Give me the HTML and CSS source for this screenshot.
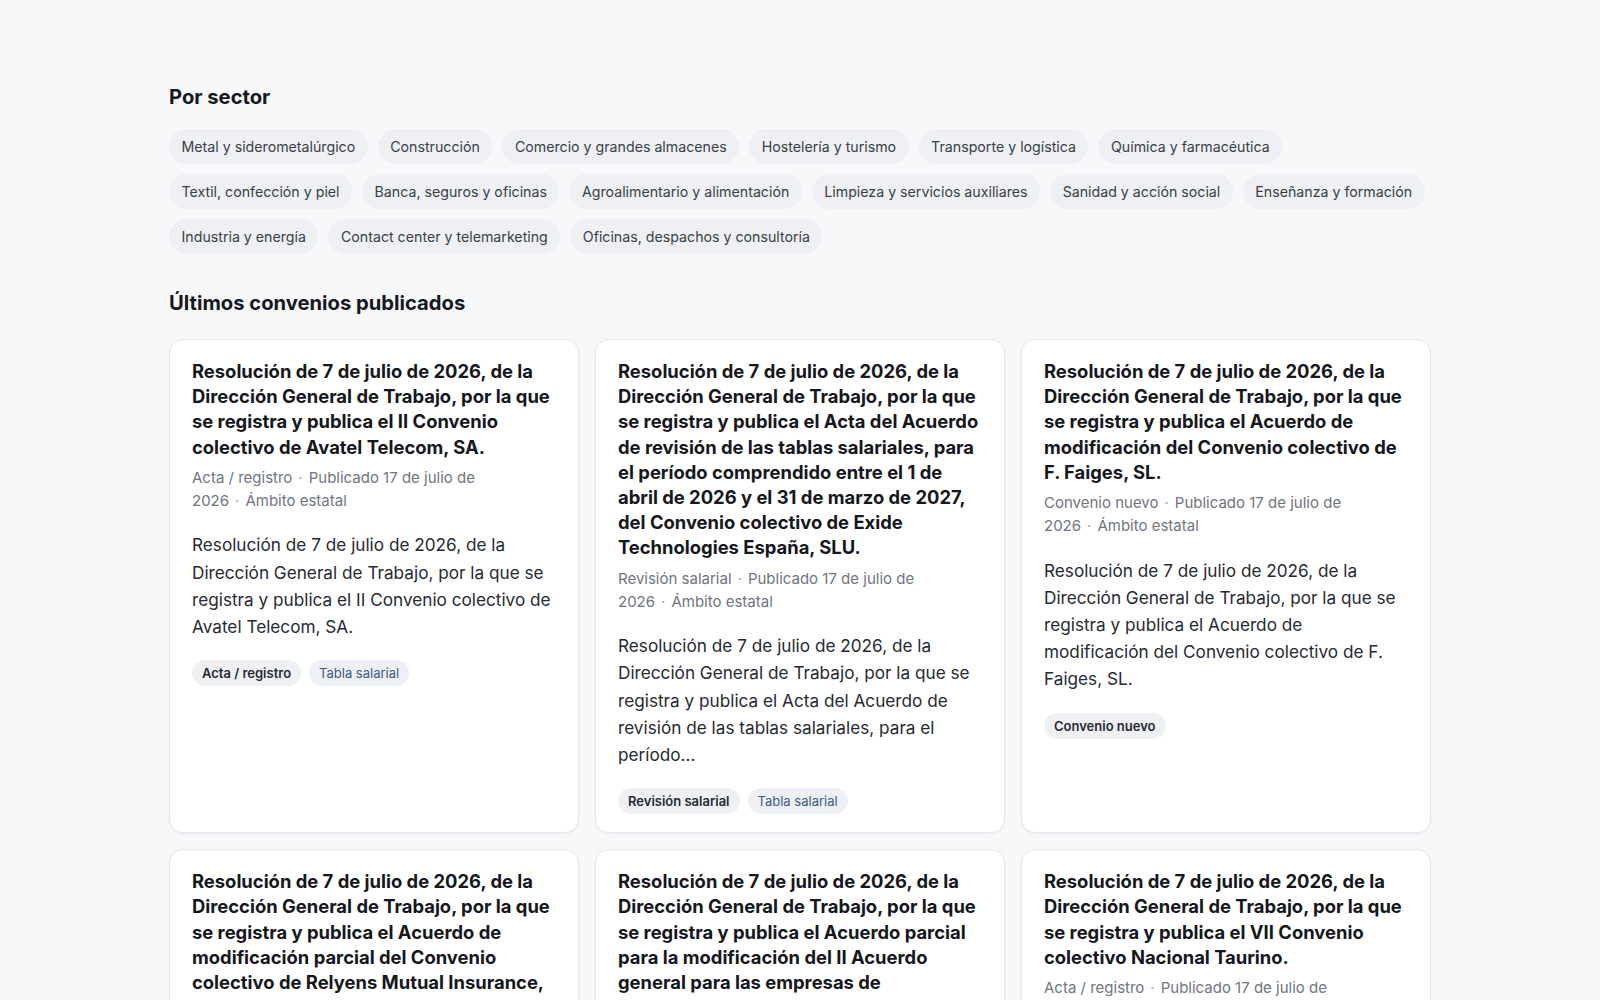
FILE: index.html
```html
<!DOCTYPE html>
<html lang="es">
<head>
    <meta charset="UTF-8">
    <meta name="viewport" content="width=device-width, initial-scale=1.0">
    <title>Convenios colectivos</title>
    <link rel="stylesheet" href="styles.css">
</head>
<body>

    <main class="page">

        <!-- sectores -->
        <section>
            <h2 class="section-title">Por sector</h2>
            <div class="sectors">
                <a class="sector" href="#">Metal y siderometalúrgico</a>
                <a class="sector" href="#">Construcción</a>
                <a class="sector" href="#">Comercio y grandes almacenes</a>
                <a class="sector" href="#">Hostelería y turismo</a>
                <a class="sector" href="#">Transporte y logística</a>
                <a class="sector" href="#">Química y farmacéutica</a>
                <a class="sector" href="#">Textil, confección y piel</a>
                <a class="sector" href="#">Banca, seguros y oficinas</a>
                <a class="sector" href="#">Agroalimentario y alimentación</a>
                <a class="sector" href="#">Limpieza y servicios auxiliares</a>
                <a class="sector" href="#">Sanidad y acción social</a>
                <a class="sector" href="#">Enseñanza y formación</a>
                <a class="sector" href="#">Industria y energía</a>
                <a class="sector" href="#">Contact center y telemarketing</a>
                <a class="sector" href="#">Oficinas, despachos y consultoría</a>
            </div>
        </section>

        <!-- últimos convenios -->
        <section>
            <h2 class="section-title latest">Últimos convenios publicados</h2>
            <div class="cards">

                <article class="card">
                    <h3 class="card-title">Resolución de 7 de julio de 2026, de la Dirección General de Trabajo, por la que se registra y publica el II Convenio colectivo de Avatel Telecom, SA.</h3>
                    <p class="card-meta">Acta / registro<span class="sep">·</span>Publicado 17 de julio de 2026<span class="sep">·</span>Ámbito estatal</p>
                    <p class="card-text">Resolución de 7 de julio de 2026, de la Dirección General de Trabajo, por la que se registra y publica el II Convenio colectivo de Avatel Telecom, SA.</p>
                    <div class="tags">
                        <span class="tag">Acta / registro</span>
                        <span class="tag tag-blue">Tabla salarial</span>
                    </div>
                </article>

                <article class="card">
                    <h3 class="card-title">Resolución de 7 de julio de 2026, de la Dirección General de Trabajo, por la que se registra y publica el Acta del Acuerdo de revisión de las tablas salariales, para el período comprendido entre el 1 de abril de 2026 y el 31 de marzo de 2027, del Convenio colectivo de Exide Technologies España, SLU.</h3>
                    <p class="card-meta">Revisión salarial<span class="sep">·</span>Publicado 17 de julio de 2026<span class="sep">·</span>Ámbito estatal</p>
                    <p class="card-text">Resolución de 7 de julio de 2026, de la Dirección General de Trabajo, por la que se registra y publica el Acta del Acuerdo de revisión de las tablas salariales, para el período…</p>
                    <div class="tags">
                        <span class="tag">Revisión salarial</span>
                        <span class="tag tag-blue">Tabla salarial</span>
                    </div>
                </article>

                <article class="card">
                    <h3 class="card-title">Resolución de 7 de julio de 2026, de la Dirección General de Trabajo, por la que se registra y publica el Acuerdo de modificación del Convenio colectivo de F. Faiges, SL.</h3>
                    <p class="card-meta">Convenio nuevo<span class="sep">·</span>Publicado 17 de julio de 2026<span class="sep">·</span>Ámbito estatal</p>
                    <p class="card-text">Resolución de 7 de julio de 2026, de la Dirección General de Trabajo, por la que se registra y publica el Acuerdo de modificación del Convenio colectivo de F. Faiges, SL.</p>
                    <div class="tags">
                        <span class="tag">Convenio nuevo</span>
                    </div>
                </article>

                <article class="card">
                    <h3 class="card-title">Resolución de 7 de julio de 2026, de la Dirección General de Trabajo, por la que se registra y publica el Acuerdo de modificación parcial del Convenio colectivo de Relyens Mutual Insurance, sucursal en España.</h3>
                    <p class="card-meta">Acta / registro<span class="sep">·</span>Publicado 17 de julio de 2026<span class="sep">·</span>Ámbito estatal</p>
                    <p class="card-text">Resolución de 7 de julio de 2026, de la Dirección General de Trabajo, por la que se registra y publica el Acuerdo de modificación parcial del Convenio colectivo de Relyens Mutual Insurance, sucursal en España.</p>
                    <div class="tags">
                        <span class="tag">Acta / registro</span>
                    </div>
                </article>

                <article class="card">
                    <h3 class="card-title">Resolución de 7 de julio de 2026, de la Dirección General de Trabajo, por la que se registra y publica el Acuerdo parcial para la modificación del II Acuerdo general para las empresas de<br>transporte de mercancías por carretera.</h3>
                    <p class="card-meta">Acta / registro<span class="sep">·</span>Publicado 17 de julio de 2026<span class="sep">·</span>Ámbito estatal</p>
                    <p class="card-text">Resolución de 7 de julio de 2026, de la Dirección General de Trabajo, por la que se registra y publica el Acuerdo parcial para la modificación del II Acuerdo general para las empresas de transporte…</p>
                    <div class="tags">
                        <span class="tag">Acta / registro</span>
                    </div>
                </article>

                <article class="card">
                    <h3 class="card-title">Resolución de 7 de julio de 2026, de la Dirección General de Trabajo, por la que se registra y publica el VII Convenio colectivo Nacional Taurino.</h3>
                    <p class="card-meta">Acta / registro<span class="sep">·</span>Publicado 17 de julio de 2026<span class="sep">·</span>Ámbito estatal</p>
                    <p class="card-text">Resolución de 7 de julio de 2026, de la Dirección General de Trabajo, por la que se registra y publica el VII Convenio colectivo Nacional Taurino.</p>
                    <div class="tags">
                        <span class="tag">Acta / registro</span>
                    </div>
                </article>

            </div>
        </section>

    </main>

</body>
</html>
```

FILE: styles.css
```css
body {
    margin: 0;
    background: #f7f8fa;
    color: #1f2329;
    font-family: Inter, "Noto Sans", sans-serif;
}

.page {
    width: 1262px;
    margin: 0 auto;
    padding: 83px 0 40px;
}

.section-title {
    margin: 0;
    font-size: 20.2px;
    line-height: 28px;
    font-weight: 700;
    color: #16181d;
}

.section-title.latest {
    margin-top: 35px;
}

/* chips de sectores */
.sectors {
    display: flex;
    flex-wrap: wrap;
    gap: 10px;
    margin-top: 18px;
}

.sector {
    padding: 7px 12.5px;
    font-size: 14.2px;
    line-height: 21px;
    color: #3a3f47;
    background: #eef0f4;
    border-radius: 999px;
    text-decoration: none;
}

/* tarjetas */
.cards {
    display: grid;
    grid-template-columns: repeat(3, 1fr);
    gap: 16px;
    margin-top: 22px;
}

.card {
    background: #fff;
    border: 1px solid #e6e8ec;
    border-radius: 14px;
    padding: 19px 22px 18px;
    box-shadow: 0 1px 3px rgba(16, 24, 40, 0.05);
}

.card-title {
    margin: 0;
    font-size: 18.4px;
    line-height: 25.2px;
    font-weight: 700;
    color: #15171c;
}

.card-meta {
    max-width: 300px;
    margin: 6px 0 0;
    font-size: 15px;
    line-height: 23.3px;
    color: #70757e;
}

.sep {
    margin: 0 6px;
    color: #a3a8b0;
}

.card-text {
    margin: 19px 0 0;
    font-size: 17.2px;
    line-height: 27.2px;
    color: #262a31;
}

.tags {
    display: flex;
    flex-wrap: wrap;
    gap: 8px;
    margin-top: 20px;
}

.tag {
    padding: 0 10px;
    font-size: 13px;
    line-height: 26px;
    font-weight: 600;
    color: #262a31;
    background: #eef0f4;
    border-radius: 999px;
}

.tag-blue {
    font-weight: 400;
    color: #3d5a80;
    background: #edf1f6;
}
```
